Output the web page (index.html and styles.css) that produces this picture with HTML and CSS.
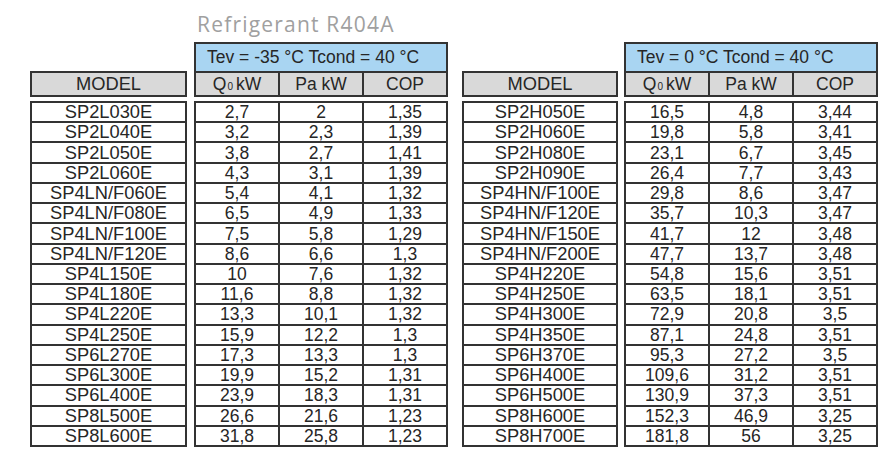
FILE: index.html
```html
<!DOCTYPE html>
<html>
<head>
<meta charset="utf-8">
<link rel="stylesheet" href="styles.css">
</head>
<body>
<div class="page">
  <div class="title">Refrigerant R404A</div>
  <div class="tables">
    <div class="side">
      <div class="model">
        <div class="head grid1"><div class="cell">MODEL</div></div>
        <div class="body grid1">
          <div class="cell">SP2L030E</div><div class="cell">SP2L040E</div><div class="cell">SP2L050E</div><div class="cell">SP2L060E</div><div class="cell">SP4LN/F060E</div><div class="cell">SP4LN/F080E</div><div class="cell">SP4LN/F100E</div><div class="cell">SP4LN/F120E</div><div class="cell">SP4L150E</div><div class="cell">SP4L180E</div><div class="cell">SP4L220E</div><div class="cell">SP4L250E</div><div class="cell">SP6L270E</div><div class="cell">SP6L300E</div><div class="cell">SP6L400E</div><div class="cell">SP8L500E</div><div class="cell">SP8L600E</div>
        </div>
      </div>
      <div class="data">
        <div class="blue">Tev = -35 °C Tcond = 40 °C</div>
        <div class="head grid3"><div class="cell">Q<span class="sub">0</span> kW</div><div class="cell">Pa kW</div><div class="cell">COP</div></div>
        <div class="body grid3">
          <div class="cell">2,7</div><div class="cell">2</div><div class="cell">1,35</div>
          <div class="cell">3,2</div><div class="cell">2,3</div><div class="cell">1,39</div>
          <div class="cell">3,8</div><div class="cell">2,7</div><div class="cell">1,41</div>
          <div class="cell">4,3</div><div class="cell">3,1</div><div class="cell">1,39</div>
          <div class="cell">5,4</div><div class="cell">4,1</div><div class="cell">1,32</div>
          <div class="cell">6,5</div><div class="cell">4,9</div><div class="cell">1,33</div>
          <div class="cell">7,5</div><div class="cell">5,8</div><div class="cell">1,29</div>
          <div class="cell">8,6</div><div class="cell">6,6</div><div class="cell">1,3</div>
          <div class="cell">10</div><div class="cell">7,6</div><div class="cell">1,32</div>
          <div class="cell">11,6</div><div class="cell">8,8</div><div class="cell">1,32</div>
          <div class="cell">13,3</div><div class="cell">10,1</div><div class="cell">1,32</div>
          <div class="cell">15,9</div><div class="cell">12,2</div><div class="cell">1,3</div>
          <div class="cell">17,3</div><div class="cell">13,3</div><div class="cell">1,3</div>
          <div class="cell">19,9</div><div class="cell">15,2</div><div class="cell">1,31</div>
          <div class="cell">23,9</div><div class="cell">18,3</div><div class="cell">1,31</div>
          <div class="cell">26,6</div><div class="cell">21,6</div><div class="cell">1,23</div>
          <div class="cell">31,8</div><div class="cell">25,8</div><div class="cell">1,23</div>
        </div>
      </div>
    </div>
    <div class="side side-right">
      <div class="model">
        <div class="head grid1"><div class="cell">MODEL</div></div>
        <div class="body grid1">
          <div class="cell">SP2H050E</div><div class="cell">SP2H060E</div><div class="cell">SP2H080E</div><div class="cell">SP2H090E</div><div class="cell">SP4HN/F100E</div><div class="cell">SP4HN/F120E</div><div class="cell">SP4HN/F150E</div><div class="cell">SP4HN/F200E</div><div class="cell">SP4H220E</div><div class="cell">SP4H250E</div><div class="cell">SP4H300E</div><div class="cell">SP4H350E</div><div class="cell">SP6H370E</div><div class="cell">SP6H400E</div><div class="cell">SP6H500E</div><div class="cell">SP8H600E</div><div class="cell">SP8H700E</div>
        </div>
      </div>
      <div class="data">
        <div class="blue">Tev = 0 °C Tcond = 40 °C</div>
        <div class="head grid3"><div class="cell">Q<span class="sub">0</span> kW</div><div class="cell">Pa kW</div><div class="cell">COP</div></div>
        <div class="body grid3">
          <div class="cell">16,5</div><div class="cell">4,8</div><div class="cell">3,44</div>
          <div class="cell">19,8</div><div class="cell">5,8</div><div class="cell">3,41</div>
          <div class="cell">23,1</div><div class="cell">6,7</div><div class="cell">3,45</div>
          <div class="cell">26,4</div><div class="cell">7,7</div><div class="cell">3,43</div>
          <div class="cell">29,8</div><div class="cell">8,6</div><div class="cell">3,47</div>
          <div class="cell">35,7</div><div class="cell">10,3</div><div class="cell">3,47</div>
          <div class="cell">41,7</div><div class="cell">12</div><div class="cell">3,48</div>
          <div class="cell">47,7</div><div class="cell">13,7</div><div class="cell">3,48</div>
          <div class="cell">54,8</div><div class="cell">15,6</div><div class="cell">3,51</div>
          <div class="cell">63,5</div><div class="cell">18,1</div><div class="cell">3,51</div>
          <div class="cell">72,9</div><div class="cell">20,8</div><div class="cell">3,5</div>
          <div class="cell">87,1</div><div class="cell">24,8</div><div class="cell">3,51</div>
          <div class="cell">95,3</div><div class="cell">27,2</div><div class="cell">3,5</div>
          <div class="cell">109,6</div><div class="cell">31,2</div><div class="cell">3,51</div>
          <div class="cell">130,9</div><div class="cell">37,3</div><div class="cell">3,51</div>
          <div class="cell">152,3</div><div class="cell">46,9</div><div class="cell">3,25</div>
          <div class="cell">181,8</div><div class="cell">56</div><div class="cell">3,25</div>
        </div>
      </div>
    </div>
  </div>
</div>
</body>
</html>
```

FILE: styles.css
```css
html, body {
  margin: 0;
  padding: 0;
  background: #ffffff;
}

.page {
  padding-left: 30px;
  font-family: "Liberation Sans", Arial, sans-serif;
  font-size: 17.5px;
  color: #262626;
}

.title {
  box-sizing: border-box;
  height: 42px;
  padding-top: 12px;
  padding-left: 167px;
  line-height: 24px;
  font-family: "Open Sans", "Liberation Sans", sans-serif;
  font-size: 21px;
  color: #a0a0a0;
  letter-spacing: 1.2px;
}

.tables {
  display: flex;
  gap: 14px;
}

.side {
  display: flex;
  gap: 7px;
}

.side-right {
  gap: 6px;
}

.model {
  width: 157px;
  padding-top: 29px;
  font-size: 18.3px;
}

.side-right .model {
  width: 156px;
}

.data {
  width: 254px;
}

.blue {
  box-sizing: border-box;
  height: 29px;
  background: #a9d5f2;
  border: 2px solid #333333;
  border-bottom: none;
  padding-left: 11px;
  line-height: 27px;
  white-space: nowrap;
}

.head,
.body {
  box-sizing: border-box;
  display: grid;
  gap: 2px;
  background: #333333;
  border: 2px solid #333333;
}

.head {
  height: 26px;
  grid-template-rows: minmax(0, 1fr);
}

.body {
  margin-top: 4px;
  height: 346px;
  grid-template-rows: repeat(17, minmax(0, 1fr));
}

.grid1 {
  grid-template-columns: 1fr;
}

.grid3 {
  grid-template-columns: 1fr 1fr 1fr;
}

.cell {
  display: flex;
  align-items: center;
  justify-content: center;
  min-height: 0;
  line-height: 18px;
  background: #ffffff;
  white-space: nowrap;
}

.head .cell {
  background: #d9d9d9;
}

.sub {
  font-size: 10px;
  position: relative;
  top: 3px;
  margin-left: 1px;
  margin-right: 3px;
}
```
